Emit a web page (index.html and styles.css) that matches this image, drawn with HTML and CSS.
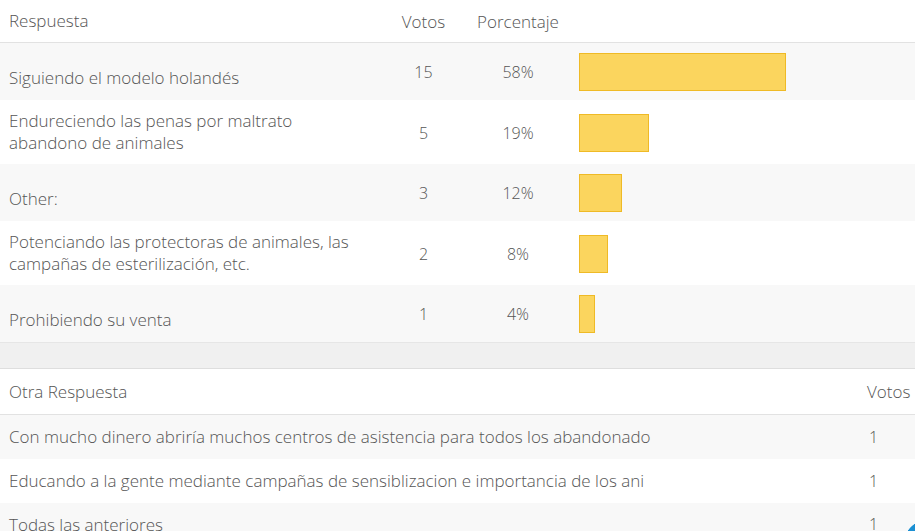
FILE: index.html
```html
<!DOCTYPE html>
<html lang="es">
<head>
<meta charset="utf-8">
<title>Resultados</title>
<link rel="stylesheet" href="styles.css">
</head>
<body>
<div class="results">
  <div class="row head">
    <div class="label">Respuesta</div>
    <div class="num">Votos</div>
    <div class="pct">Porcentaje</div>
    <div class="barcell"></div>
  </div>
  <div class="row alt">
    <div class="label single">Siguiendo el modelo holandés</div>
    <div class="num">15</div>
    <div class="pct">58%</div>
    <div class="barcell"><div class="bar" style="width:207px"></div></div>
  </div>
  <div class="row">
    <div class="label">Endureciendo las penas por maltrato<br>abandono de animales</div>
    <div class="num">5</div>
    <div class="pct">19%</div>
    <div class="barcell"><div class="bar" style="width:70px"></div></div>
  </div>
  <div class="row alt">
    <div class="label single">Other:</div>
    <div class="num">3</div>
    <div class="pct">12%</div>
    <div class="barcell"><div class="bar" style="width:43px"></div></div>
  </div>
  <div class="row">
    <div class="label">Potenciando las protectoras de animales, las<br>campañas de esterilización, etc.</div>
    <div class="num">2</div>
    <div class="pct">8%</div>
    <div class="barcell"><div class="bar" style="width:29px"></div></div>
  </div>
  <div class="row alt last">
    <div class="label single">Prohibiendo su venta</div>
    <div class="num">1</div>
    <div class="pct">4%</div>
    <div class="barcell"><div class="bar" style="width:16px"></div></div>
  </div>
</div>
<div class="spacer"></div>
<div class="others">
  <div class="orow ohead">
    <div class="otext">Otra Respuesta</div>
    <div class="ovotes">Votos</div>
  </div>
  <div class="orow alt">
    <div class="otext">Con mucho dinero abriría muchos centros de asistencia para todos los abandonado</div>
    <div class="ovotes">1</div>
  </div>
  <div class="orow">
    <div class="otext">Educando a la gente mediante campañas de sensiblizacion e importancia de los ani</div>
    <div class="ovotes">1</div>
  </div>
  <div class="orow alt olast">
    <div class="otext">Todas las anteriores</div>
    <div class="ovotes">1</div>
  </div>
</div>
<div class="chat-bubble"></div>
</body>
</html>
```
FILE: styles.css
```css
html, body {
  margin: 0;
  padding: 0;
  background: #fff;
  overflow: hidden;
  height: 531px;
}
body {
  font-family: "Open Sans", "Liberation Sans", sans-serif;
  font-weight: 300;
  font-size: 17px;
  color: #555;
  position: relative;
}
.row {
  display: grid;
  grid-template-columns: 390px 67px 122px 1fr;
  align-items: center;
  padding: 10px 0 9px;
  background: #fff;
}
.row.alt { background: #f8f8f8; }
.row.head {
  height: 43px;
  box-sizing: border-box;
  padding: 0;
  border-bottom: 1px solid #e2e2e2;
}
.row.last { border-bottom: 1px solid #e6e6e6; }
.label {
  padding-left: 9px;
  padding-bottom: 1px;
  line-height: 22px;
  white-space: nowrap;
}
.label.single { margin-top: 13px; }
.num, .pct { text-align: center; font-size: 16px; }
.row.head .num, .row.head .pct { font-size: 17px; }
.barcell { height: 38px; display: flex; }
.row.head .barcell { height: auto; }
.bar {
  box-sizing: border-box;
  height: 38px;
  background: #fbd55e;
  border: 1px solid #efba26;
}
.spacer {
  height: 25px;
  background: #f0f0f0;
  border-bottom: 1px solid #dedede;
}
.orow {
  display: grid;
  grid-template-columns: 867px 1fr;
  align-items: center;
  padding: 11px 0;
  line-height: 22px;
  background: #fff;
}
.orow.alt { background: #f8f8f8; }
.orow.ohead {
  padding: 12px 0 11px;
  border-bottom: 1px solid #e2e2e2;
}
.orow.olast {
  padding: 13px 0 0;
  line-height: 17px;
}
.otext { padding-left: 9px; white-space: nowrap; }
.ovotes { padding-left: 2px; font-size: 16px; }
.ohead .ovotes { padding-left: 0; font-size: 17px; }
.chat-bubble {
  position: absolute;
  left: 902px;
  top: 518px;
  width: 13px;
  height: 13px;
  background: radial-gradient(circle 30px at 30px 30px, #1b8fd2 29.5px, transparent 30px);
}
```
